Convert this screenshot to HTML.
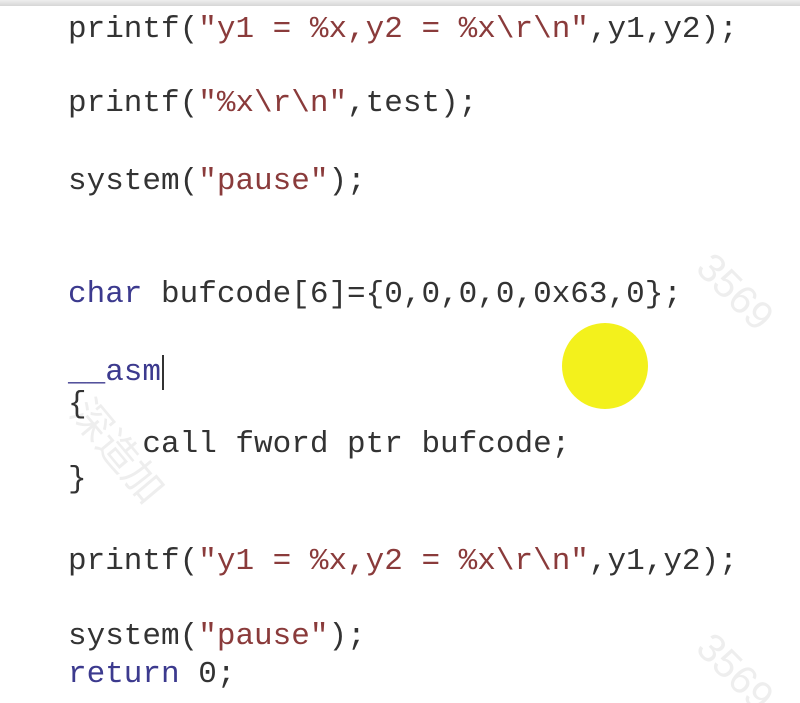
<!DOCTYPE html>
<html><head><meta charset="utf-8"><style>
html,body{margin:0;padding:0;background:#fff;width:800px;height:703px;overflow:hidden;position:relative}
.bar{position:absolute;left:0;top:0;width:800px;height:6px;background:linear-gradient(#eee,#d6d6d6)}
.l{position:absolute;left:68px;height:40px;line-height:40px;font-family:"Liberation Mono",monospace;font-size:31px;color:#333;white-space:pre}
.k{color:#3c3a8e}.s{color:#8a3b3b}
.dot{position:absolute;left:562px;top:323px;width:86px;height:86px;border-radius:50%;background:#f3f11c}
.wm{position:absolute;font-family:"Liberation Sans","Noto Sans CJK SC",sans-serif;color:#eee;font-size:40px;white-space:pre}
</style></head><body>
<div class="bar"></div>
<div class="wm" style="left:690px;top:270px;transform:rotate(45deg)">3569</div>
<div class="wm" style="left:690px;top:650px;transform:rotate(45deg)">3569</div>
<div class="wm" style="left:60px;top:420px;transform:rotate(50deg)">深造加</div>
<div class="dot"></div>
<div class="l" style="top:10px">printf(<span class="s">"y1 = %x,y2 = %x\r\n"</span>,y1,y2);</div>
<div class="l" style="top:84px">printf(<span class="s">"%x\r\n"</span>,test);</div>
<div class="l" style="top:162px">system(<span class="s">"pause"</span>);</div>
<div class="l" style="top:275px"><span class="k">char</span> bufcode[6]={0,0,0,0,0x63,0};</div>
<div class="l k" style="top:353px">__asm<span style="border-left:2px solid #333;margin-left:1px"></span></div>
<div class="l" style="top:385px">{</div>
<div class="l" style="top:425px">    call fword ptr bufcode;</div>
<div class="l" style="top:460px">}</div>
<div class="l" style="top:542px">printf(<span class="s">"y1 = %x,y2 = %x\r\n"</span>,y1,y2);</div>
<div class="l" style="top:617px">system(<span class="s">"pause"</span>);</div>
<div class="l" style="top:655px"><span class="k">return</span> 0;</div>
</body></html>
